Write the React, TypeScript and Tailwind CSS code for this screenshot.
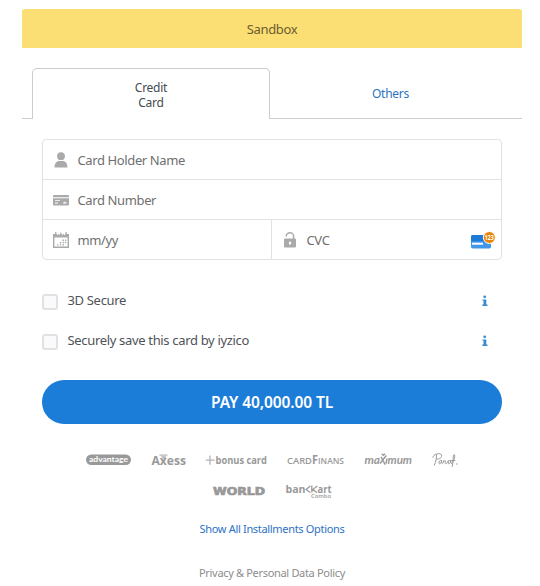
import type { ReactNode } from "react";

const UserIcon = () => (
  <svg width="16" height="16" viewBox="0 0 16 16" fill="#aaaaaa">
    <circle cx="8" cy="4.200" r="3.900" />
    <path d="M1.500 15.500c0-4.600 2.400-6.600 4.500-6.600h4c2.100 0 4.500 2 4.500 6.600z" />
  </svg>
);

const CardIcon = () => (
  <svg width="16" height="16" viewBox="0 0 16 16" fill="#aaaaaa">
    <path d="M1 3h14q1 0 1 1v1.200H0V4q0-1 1-1z" />
    <path
      fillRule="evenodd"
      d="M0 6.300h16v6.200q0 1-1 1H1q-1 0-1-1zM2 8.200v.9h5v-.9zM2 10.600v.9h3v-.9zM10 10.600v.9h3.500v-.9h-1v-.9h-1.300v.9z"
    />
  </svg>
);

const CalendarIcon = () => (
  <svg width="16" height="16" viewBox="0 0 16 16" fill="#aaaaaa">
    <path fillRule="evenodd" d="M0 2h16v14H0zM1.400 5.600v9h13.200v-9z" />
    <path d="M2.100 0h1.300v3H2.100zM7.200.7h1.300v2.300H7.200zM12.500 0h1.300v3h-1.300z" />
    <path d="M9.500 7.600h1.500v1.500H9.500zM12 7.600h1.300v1.500H12zM6.800 9.900h1.400v1.300H6.800zM9.500 9.900h1.500v1.300H9.500zM12 9.900h1.300v1.300H12zM4 12.300h1.300v1.200H4zM6.800 12.300h1.400v1.200H6.800zM9.500 12.300h1.500v1.200H9.500z" />
    <path d="M4.300 2v1.200M6.300 2v1.200M9.400 2v1.200M11.600 2v1.200" stroke="#fff" strokeWidth=".8" />
  </svg>
);

const LockIcon = () => (
  <svg width="14" height="16" viewBox="0 0 14 16">
    <path d="M3.200 4.500V4a3.700 3.200 0 0 1 7.400 0v4" fill="none" stroke="#aaaaaa" strokeWidth="1.500" />
    <path
      fill="#aaaaaa"
      fillRule="evenodd"
      d="M2 6.500h10q1 0 1 1V14.500q0 1-1 1H2q-1 0-1-1V7.500q0-1 1-1zM7 9.600a1.200 1.200 0 0 0-.7 2.200v1h1.400v-1A1.200 1.200 0 0 0 7 9.600z"
    />
  </svg>
);

const CvcCard = () => (
  <svg width="26" height="18" viewBox="0 0 26 18">
    <rect x="1" y="4" width="20" height="13.500" rx="1.800" fill="#4197ea" />
    <path d="M2.800 4H20v6.200H1V5.800Q1 4 2.800 4z" fill="#1d7bd6" />
    <rect x="2" y="11.700" width="11" height="2" fill="#fff" />
    <circle cx="19.300" cy="6.500" r="6" fill="#e8850c" stroke="#fff" strokeWidth="1" />
    <text x="14.800" y="8.800" textLength="9" lengthAdjust="spacingAndGlyphs" fontSize="6.500" fontWeight="700" fill="#fff" fontFamily="Open Sans, sans-serif">
      123
    </text>
  </svg>
);

const InfoIcon = () => (
  <svg width="6" height="12" viewBox="0 0 6 12" fill="#3b8bd0">
    <circle cx="2.700" cy="1.800" r="1.400" />
    <path d="M.5 4.400h3.800v5h1.200v1.500H.3V9.400h1.200V5.800H.5z" />
  </svg>
);

function Field({ icon, label, children }: { icon: ReactNode; label: string; children?: ReactNode }) {
  return (
    <div className="flex h-[39px] items-center pl-[9px] pr-[5px]">
      <span className="flex w-[17px] justify-center">{icon}</span>
      <span className="ml-[8.5px] flex-1 pt-px text-[13px] leading-5 tracking-[-0.38px] text-[#6f6f6f]">{label}</span>
      {children}
    </div>
  );
}

function Option({ label }: { label: string }) {
  return (
    <div className="flex h-5 items-center">
      <span className="mt-[2px] h-4 w-4 rounded-[3px] border-2 border-[#e1e1e3] bg-[#fafafc]" />
      <span className="-mt-0.5 ml-[9.5px] flex-1 text-[13px] leading-5 tracking-[-0.33px] text-[#4f5357]">{label}</span>
      <span className="mr-[14px]">
        <InfoIcon />
      </span>
    </div>
  );
}

const BankLogos = () => (
  <svg width="376" height="50" viewBox="84 450 376 50" fill="#999999" fontFamily="Open Sans, sans-serif">
    <rect x="86" y="454.500" width="45" height="10.500" rx="5.200" />
    <text x="89" y="462.300" textLength="39" lengthAdjust="spacingAndGlyphs" fontFamily="Lato, sans-serif" fontSize="8" fontWeight="700" fill="#fff">advantage</text>
    <text x="151.500" y="465" fontSize="11.500" fontWeight="700" textLength="34.500" lengthAdjust="spacingAndGlyphs">Axess</text>
    <path d="M159.500 454.500h8v1.200h-8zM161 456.300h5.500l-1.500 2.500h-2z" opacity=".7" />
    <path d="M209.300 455.500h1.300v4h4v1.300h-4v4h-1.300v-4h-3.500v-1.300h3.500z" opacity=".75" />
    <text x="215.500" y="464.200" fontSize="11" fontWeight="700" textLength="51.500" lengthAdjust="spacingAndGlyphs">bonus card</text>
    <text x="287" y="464" fontSize="9.500" fontWeight="600" textLength="25" lengthAdjust="spacingAndGlyphs">CARD</text>
    <text x="312" y="464" fontSize="11.500" fontWeight="700" textLength="6" lengthAdjust="spacingAndGlyphs">F</text>
    <text x="318" y="464" fontSize="9.500" fontWeight="600" textLength="26" lengthAdjust="spacingAndGlyphs">INANS</text>
    <g fontFamily="Lato, sans-serif" fontStyle="italic" fontWeight="700">
      <text x="364.500" y="463.500" fontSize="12" textLength="15.500" lengthAdjust="spacingAndGlyphs">ma</text>
      <text x="387.500" y="463.500" fontSize="12" textLength="24.500" lengthAdjust="spacingAndGlyphs">mum</text>
    </g>
    <path d="M381 456.800l4.200 7.800M386.300 455.500l-6.300 8M387 458.500l-1 5M381.800 453.800l1.500 1.500 1.700-1.500" fill="none" stroke="#999" strokeWidth="1.400" />
    <g fill="none" stroke="#999" strokeWidth="1" strokeLinecap="round" strokeLinejoin="round">
      <path d="M436.500 454.800c.3 3-.5 7-2.200 10.400M433 457.500c-.7-3.300 7.300-5.300 8.500-2.500 1 2.500-2.500 4.200-4.700 4.300" />
      <path d="M441.600 460.600c-1.700-1-3 .8-2.600 2.600.5 1.500 2.200.2 2.600-2.300-.2 2.500.5 3.400 1.500 2l.8-2.400c.4 1 1.300.3 1.700.5-.6 1.400-.6 3.400.6 2.600.8-.5 1.500-1.600 2-2.800" />
      <path d="M450.800 460.600c-1.700-1-3 .8-2.600 2.600.5 1.500 2.200.2 2.600-2.300-.2 2.500.5 3.400 1.400 2 1.800-2.500 3.400-7.900 2-8.400-1.600.3-.6 8-2 12M451.800 460.500h3.200" />
    </g>
    <circle cx="456.800" cy="464" r=".7" />
    <text x="213" y="495" fontFamily="DejaVu Sans, sans-serif" fontSize="10" fontWeight="700" stroke="#999" strokeWidth=".7" textLength="52" lengthAdjust="spacingAndGlyphs">WORLD</text>
    <text x="285.500" y="492.500" fontSize="10.500" fontWeight="700" textLength="20" lengthAdjust="spacingAndGlyphs">ban</text>
    <path d="M310.300 486l-4.200 3.500 4.100 3M311.800 485.500v7M317.300 486l-4.600 3.600 4.400 2.900" fill="none" stroke="#999" strokeWidth="1.300" />
    <text x="317.500" y="492.500" fontSize="10.500" fontWeight="700" textLength="14" lengthAdjust="spacingAndGlyphs">art</text>
    <text x="311" y="498.300" fontSize="6" fontWeight="600" textLength="20" lengthAdjust="spacingAndGlyphs">Combo</text>
  </svg>
);

export default function App() {
  return (
    <main className="flex h-[586px] w-[540px] flex-col overflow-hidden bg-white pt-[9px] pr-[18px] pl-[22px] font-['Noto_Sans',sans-serif]">
      <header className="flex h-[39px] shrink-0 items-center justify-center rounded-t-[3px] bg-[#fcdf74] text-[13px] tracking-[-0.35px] text-[#6a5c30]">
        <span className="pt-[2px]">Sandbox</span>
      </header>
      <nav className="mt-5 flex h-[51px] shrink-0 text-center text-[12px] leading-[15px] tracking-[-0.25px]">
        <span className="w-[10px] border-b border-[#cccccc]" />
        <button className="w-[238px] rounded-t-[5px] border border-b-0 border-[#cccccc] pt-px text-[#454b50]">
          Credit
          <br />
          Card
        </button>
        <button className="flex-1 border-b border-[#cccccc] pr-[11px] text-[#2d72c4]">Others</button>
      </nav>
      <section className="mx-5 mt-5 shrink-0 rounded-[4px] border border-[#e2e2e2]">
        <div className="border-b border-[#e2e2e2]">
          <Field icon={<UserIcon />} label="Card Holder Name" />
        </div>
        <div className="border-b border-[#e2e2e2]">
          <Field icon={<CardIcon />} label="Card Number" />
        </div>
        <div className="flex">
          <div className="w-[229px] border-r border-[#e2e2e2]">
            <Field icon={<CalendarIcon />} label="mm/yy" />
          </div>
          <div className="flex-1">
            <Field icon={<LockIcon />} label="CVC">
              <CvcCard />
            </Field>
          </div>
        </div>
      </section>
      <section className="mx-5 mt-[31px] flex flex-col gap-5">
        <Option label="3D Secure" />
        <Option label="Securely save this card by iyzico" />
      </section>
      <button className="mx-5 mt-[29px] h-11 shrink-0 rounded-full bg-[#1c7dd9] pt-px text-[15.5px] font-semibold tracking-[-0.1px] text-white">
        PAY 40,000.00 TL
      </button>
      <section className="mt-[26px] ml-[62px] shrink-0">
        <BankLogos />
      </section>
      <footer className="flex flex-col items-center text-[11px] leading-4 tracking-[-0.32px]">
        <span className="mt-[21px] text-[#2d72c4]">Show All Installments Options</span>
        <span className="mt-7 text-[#8d8d8d]">Privacy &amp; Personal Data Policy</span>
      </footer>
    </main>
  );
}
